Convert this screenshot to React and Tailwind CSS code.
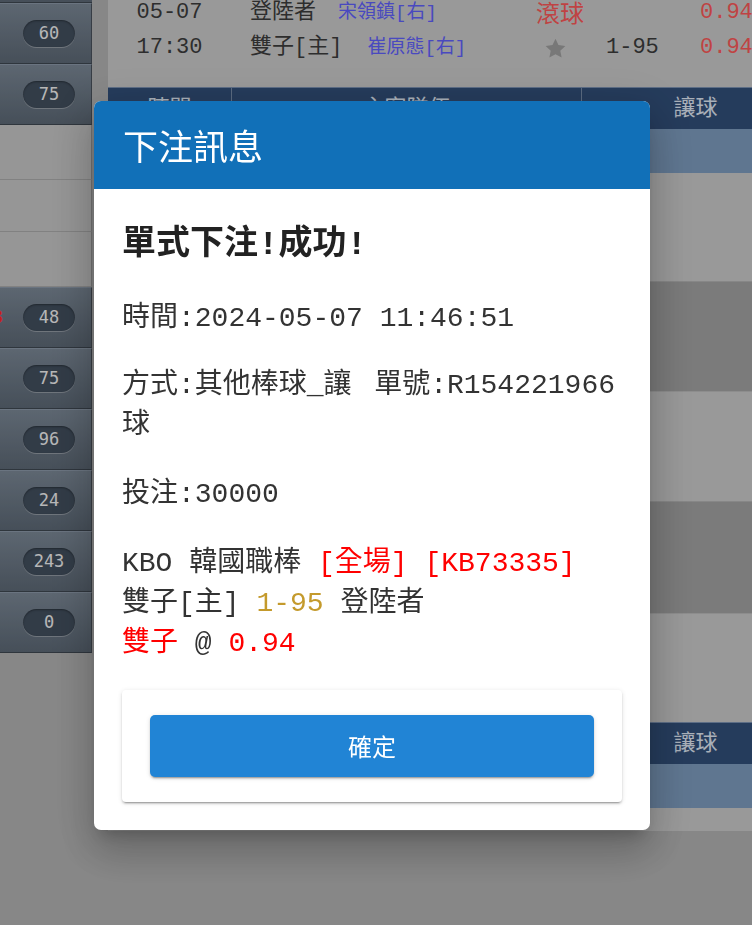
import React from "react";

const MONO = { fontFamily: "'Liberation Mono','Noto Sans CJK TC',monospace" };
const SANS = { fontFamily: "'Noto Sans CJK TC','Noto Sans',sans-serif" };

function Badge({ n }) {
  return (
    <span
      className="w-[52px] h-[27px] rounded-full bg-[#43505f] text-[#f4f4f4] text-[17px] leading-[27px] text-center shadow-[0_1px_0_rgba(255,255,255,0.3),inset_0_1px_2px_rgba(0,0,0,0.35)]"
      style={{ fontFamily: "'DejaVu Sans Mono',monospace" }}
    >
      {n}
    </span>
  );
}

function DarkRow({ n, lead }) {
  return (
    <div className="h-[61px] flex items-center justify-between pr-[16px] bg-linear-to-b from-[#7c8997] to-[#5e6a77] border-t border-[#8e9bab] border-b border-b-[#3f4852] border-r border-r-[#4a525c]">
      <span className="-ml-[9px] text-[20px] font-bold text-[#ff2a2a] leading-none" style={MONO}>
        {lead || ""}
      </span>
      <Badge n={n} />
    </div>
  );
}

function LightRow({ h }) {
  return <div className={`${h} bg-[#c8c8c8] border-b border-[#adadad] border-r border-r-[#9a9a9a]`} />;
}

function HeaderBar({ labels }) {
  return (
    <div className="h-[42px] shrink-0 bg-[#32507b] border-t border-[#7d93b3] flex text-[22px] text-[#e2ebf7] leading-[34px]" style={SANS}>
      <div className="w-[123px] text-center">{labels ? "時間" : ""}</div>
      <div className="w-[350px] text-center border-l border-[#7a8fac]">{labels ? "主客隊伍" : ""}</div>
      <div className="w-[228px] text-center border-l border-[#7a8fac]">讓球</div>
    </div>
  );
}

export default function App() {
  return (
    <div className="relative h-[925px] overflow-hidden bg-[#b5b5b5] flex" style={MONO}>
      {/* sidebar */}
      <aside className="w-[92px] shrink-0 self-start flex flex-col">
        <div className="h-[3px] bg-[#5e6a77] border-b border-[#3f4852]" />
        <DarkRow n="60" />
        <DarkRow n="75" />
        <LightRow h="h-[55px]" />
        <LightRow h="h-[52px]" />
        <LightRow h="h-[55px]" />
        <DarkRow n="48" lead="3" />
        <DarkRow n="75" />
        <DarkRow n="96" />
        <DarkRow n="24" />
        <DarkRow n="243" />
        <DarkRow n="0" />
      </aside>

      {/* main */}
      <main className="ml-[16px] flex-1 self-start flex flex-col">
        <div className="h-[87px] bg-[#cdcdcd] flex flex-col gap-[11px] pt-[1px] text-[22px] leading-[24px] text-[#3d3d3d]">
          <div className="flex items-center">
            <span className="w-[123px] text-center">05-07</span>
            <span className="w-[289px] pl-[19px] flex items-center" style={MONO}>
              <span>登陸者</span>
              <span className="ml-[22px] text-[19px] text-[#6262ff]">宋領鎮[右]</span>
            </span>
            <span className="w-[80px] text-center text-[24px] text-[#ff5a5a] -mt-[3px]" style={SANS}>滾球</span>
            <span className="w-[100px]" />
            <span className="text-[#ff5a5a]">0.94</span>
          </div>
          <div className="flex items-center">
            <span className="w-[123px] text-center">17:30</span>
            <span className="w-[289px] pl-[19px] flex items-center">
              <span>雙子[主]</span>
              <span className="ml-[25px] text-[19px] text-[#6262ff]">崔原態[右]</span>
            </span>
            <span className="w-[80px] flex justify-center pr-[10px]">
              <svg width="23" height="23" viewBox="0 0 24 24">
                <path d="M12 1.8l3.1 6.6 7.2.9-5.3 5 1.4 7.1L12 17.9l-6.4 3.5 1.4-7.1-5.3-5 7.2-.9z" fill="#a0a0a0" />
              </svg>
            </span>
            <span className="w-[100px] pl-[6px]">1-95</span>
            <span className="text-[#ff5a5a]">0.94</span>
          </div>
        </div>
        <HeaderBar labels />
        <div className="h-[44px] bg-[#7f9ec1]" />
        <div className="h-[109px] bg-[#cdcdcd] border-b border-[#b4b4b4]" />
        <div className="h-[110px] bg-[#a4a4a4] border-b border-[#bdbdbd]" />
        <div className="h-[110px] bg-[#cdcdcd] border-b border-[#b4b4b4]" />
        <div className="h-[112px] bg-[#a4a4a4] border-b border-[#bdbdbd]" />
        <div className="h-[108px] bg-[#cdcdcd]" />
        <HeaderBar />
        <div className="h-[44px] bg-[#7f9ec1]" />
        <div className="h-[23px] bg-[#cdcdcd]" />
      </main>

      {/* overlay */}
      <div className="fixed inset-0 bg-black/25" />

      {/* dialog */}
      <div className="fixed inset-0 flex items-center justify-center pr-[8px] pt-[6px]">
        <div className="w-[556px] rounded-[7px] bg-white overflow-hidden shadow-[0_11px_15px_-7px_rgba(0,0,0,0.2),0_24px_38px_3px_rgba(0,0,0,0.14),0_9px_46px_8px_rgba(0,0,0,0.12)]">
          <div className="h-[88px] bg-[#1170b8] flex items-center px-[29px]">
            <h2 className="text-[35px] leading-[40px] text-white font-normal" style={SANS}>
              下注訊息
            </h2>
          </div>
          <div className="px-[28px] pt-[36px] pb-[28px] flex flex-col text-[28px] leading-[40px] text-[#333]" style={MONO}>
            <h3 className="text-[34px] leading-[40px] font-bold text-[#222]">單式下注!成功!</h3>
            <p className="mt-[34px]">時間:2024-05-07 11:46:51</p>
            <div className="mt-[27px] flex gap-[20px]">
              <span className="flex-1 min-w-0">方式:其他棒球_讓球</span>
              <span className="shrink-0 whitespace-nowrap pr-[7px]">單號:R154221966</span>
            </div>
            <p className="mt-[29px]">投注:30000</p>
            <div className="mt-[29px]">
              <div className="whitespace-nowrap">
                KBO 韓國職棒 <span className="text-[#ff0000]">[全場]</span>{" "}
                <span className="text-[#ff0000]">[KB73335]</span>
              </div>
              <div className="whitespace-nowrap">
                雙子[主] <span className="text-[#c49a2c]">1-95</span> 登陸者
              </div>
              <div className="whitespace-nowrap">
                <span className="text-[#ff0000]">雙子</span> @ <span className="text-[#ff0000]">0.94</span>
              </div>
            </div>
            <div className="mt-[26px] rounded-[4px] bg-white px-[28px] py-[25px] shadow-[0_3px_1px_-2px_rgba(0,0,0,0.2),0_2px_2px_0_rgba(0,0,0,0.14),0_1px_5px_0_rgba(0,0,0,0.12)]">
              <button
                className="w-full h-[62px] rounded-[5px] bg-[#2184d5] text-white text-[24px] leading-[58px] shadow-[0_3px_1px_-2px_rgba(0,0,0,0.2),0_2px_2px_0_rgba(0,0,0,0.14),0_1px_5px_0_rgba(0,0,0,0.12)]"
                style={SANS}
              >
                確定
              </button>
            </div>
          </div>
        </div>
      </div>
    </div>
  );
}
